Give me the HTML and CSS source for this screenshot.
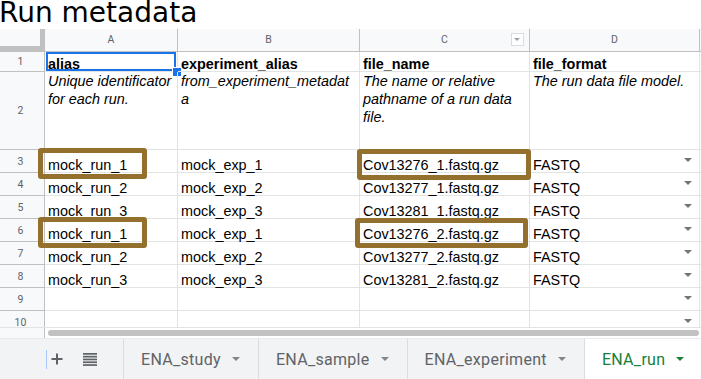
FILE: index.html
```html
<!DOCTYPE html>
<html lang="en">
<head>
    <meta charset="UTF-8">
    <meta name="viewport" content="width=device-width, initial-scale=1.0">
    <title>Run metadata</title>
    <link rel="stylesheet" href="styles.css">
</head>
<body>
    <h1 class="page-title">Run metadata</h1>

    <!-- Spreadsheet grid -->
    <div class="sheet">
        <div class="grid">
            <div class="corner"></div>
            <div class="col-head">A</div>
            <div class="col-head">B</div>
            <div class="col-head">C<span class="col-menu"></span></div>
            <div class="col-head">D</div>
            <div class="col-head"></div>

            <div class="row-head">1</div>
            <div class="cell bold selected">alias</div>
            <div class="cell bold">experiment_alias</div>
            <div class="cell bold">file_name</div>
            <div class="cell bold">file_format</div>
            <div class="cell"></div>

            <div class="row-head">2</div>
            <div class="cell note">Unique identificator for each run.</div>
            <div class="cell note">from_experiment_metadata</div>
            <div class="cell note">The name or relative pathname of a run data file.</div>
            <div class="cell note">The run data file model.</div>
            <div class="cell"></div>

            <div class="row-head">3</div>
            <div class="cell">mock_run_1</div>
            <div class="cell">mock_exp_1</div>
            <div class="cell">Cov13276_1.fastq.gz</div>
            <div class="cell">FASTQ<span class="dd"></span></div>
            <div class="cell"></div>

            <div class="row-head">4</div>
            <div class="cell">mock_run_2</div>
            <div class="cell">mock_exp_2</div>
            <div class="cell">Cov13277_1.fastq.gz</div>
            <div class="cell">FASTQ<span class="dd"></span></div>
            <div class="cell"></div>

            <div class="row-head">5</div>
            <div class="cell">mock_run_3</div>
            <div class="cell">mock_exp_3</div>
            <div class="cell">Cov13281_1.fastq.gz</div>
            <div class="cell">FASTQ<span class="dd"></span></div>
            <div class="cell"></div>

            <div class="row-head">6</div>
            <div class="cell">mock_run_1</div>
            <div class="cell">mock_exp_1</div>
            <div class="cell">Cov13276_2.fastq.gz</div>
            <div class="cell">FASTQ<span class="dd"></span></div>
            <div class="cell"></div>

            <div class="row-head">7</div>
            <div class="cell">mock_run_2</div>
            <div class="cell">mock_exp_2</div>
            <div class="cell">Cov13277_2.fastq.gz</div>
            <div class="cell">FASTQ<span class="dd"></span></div>
            <div class="cell"></div>

            <div class="row-head">8</div>
            <div class="cell">mock_run_3</div>
            <div class="cell">mock_exp_3</div>
            <div class="cell">Cov13281_2.fastq.gz</div>
            <div class="cell">FASTQ<span class="dd"></span></div>
            <div class="cell"></div>

            <div class="row-head">9</div>
            <div class="cell"></div>
            <div class="cell"></div>
            <div class="cell"></div>
            <div class="cell"><span class="dd"></span></div>
            <div class="cell"></div>

            <div class="row-head">10</div>
            <div class="cell"></div>
            <div class="cell"></div>
            <div class="cell"></div>
            <div class="cell"><span class="dd"></span></div>
            <div class="cell"></div>
        </div>

        <!-- Highlight boxes drawn over the grid -->
        <div class="mark mark-a3"></div>
        <div class="mark mark-a6"></div>
        <div class="mark mark-c3"></div>
        <div class="mark mark-c6"></div>
    </div>

    <!-- Horizontal scrollbar -->
    <div class="hscroll">
        <div class="hscroll-gutter"></div>
        <div class="hscroll-track"><div class="hscroll-thumb"></div></div>
    </div>

    <!-- Sheet tabs -->
    <div class="tabbar">
        <div class="tab-tools">
            <span class="drop-line"></span>
            <svg class="icon-add" width="12" height="12" viewBox="0 0 12 12">
                <path d="M6 0.5v11M0.5 6h11" stroke="#5f6368" stroke-width="2" fill="none"/>
            </svg>
            <svg class="icon-list" width="14" height="13" viewBox="0 0 14 13">
                <rect x="0" y="0" width="14" height="1.7" fill="#5f6368"/>
                <rect x="0" y="2.8" width="14" height="1.7" fill="#5f6368"/>
                <rect x="0" y="5.6" width="14" height="1.7" fill="#5f6368"/>
                <rect x="0" y="8.4" width="14" height="1.7" fill="#5f6368"/>
                <rect x="0" y="11.2" width="14" height="1.7" fill="#5f6368"/>
            </svg>
        </div>
        <div class="tab">ENA_study<span class="tab-caret"></span></div>
        <div class="tab">ENA_sample<span class="tab-caret"></span></div>
        <div class="tab">ENA_experiment<span class="tab-caret"></span></div>
        <div class="tab active">ENA_run<span class="tab-caret"></span></div>
    </div>
</body>
</html>
```

FILE: styles.css
```css
* {
    box-sizing: border-box;
}

body {
    margin: 0;
    width: 701px;
    height: 379px;
    overflow: hidden;
    background-color: #fff;
    font-family: "Liberation Sans", Arial, sans-serif;
    color: #000;
}

.page-title {
    margin: 0 0 0 -1px;
    height: 29px;
    font-family: "DejaVu Sans", sans-serif;
    font-size: 28px;
    font-weight: normal;
    line-height: 25px;
    white-space: nowrap;
}

/* grid */
.sheet {
    position: relative;
    height: 298px;
    overflow: hidden;
}

.grid {
    display: grid;
    grid-template-columns: 45px 133px 182px 170px 170px 1fr;
    grid-template-rows: 23px 20px 78px repeat(8, 23px);
}

.corner {
    background-color: #f8f9fa;
    border-right: 5px solid #c0c0c0;
    border-bottom: 6px solid #c0c0c0;
}

.col-head,
.row-head {
    position: relative;
    display: flex;
    align-items: center;
    justify-content: center;
    background-color: #f8f9fa;
    border-right: 1px solid #c0c0c0;
    border-bottom: 1px solid #c0c0c0;
    color: #5f6368;
    font-family: Roboto, Arial, sans-serif;
    font-size: 10.5px;
}

.col-head {
    padding-bottom: 2px;
}

.row-head {
    padding-right: 3px;
}

.col-menu {
    position: absolute;
    top: 4px;
    right: 5px;
    width: 13px;
    height: 13px;
    border: 1px solid #dadce0;
    background-color: #fff;
}

.col-menu::after {
    content: "";
    position: absolute;
    left: 2px;
    top: 4px;
    border-left: 3.5px solid transparent;
    border-right: 3.5px solid transparent;
    border-top: 3.5px solid #9aa0a6;
}

.cell {
    position: relative;
    display: flex;
    align-items: flex-end;
    padding: 0 3px;
    border-right: 1px solid #e2e3e3;
    border-bottom: 1px solid #e2e3e3;
    font-size: 14.4px;
    line-height: 14px;
    white-space: nowrap;
}

.cell.bold {
    font-weight: bold;
}

.cell.note {
    display: block;
    font-style: italic;
    line-height: 18px;
    white-space: normal;
    overflow-wrap: anywhere;
}

.cell.selected::before {
    content: "";
    position: absolute;
    top: 0;
    bottom: 0;
    left: 1px;
    right: 1px;
    border: 2px solid #1a73e8;
}

.cell.selected::after {
    content: "";
    position: absolute;
    left: 127px;
    top: 15px;
    width: 8px;
    height: 8px;
    background-color: #1a73e8;
    border: 1px solid #fff;
}

.dd {
    margin-left: auto;
    margin-right: 4px;
    margin-top: 8px;
    align-self: flex-start;
    width: 0;
    height: 0;
    border-left: 4px solid transparent;
    border-right: 4px solid transparent;
    border-top: 4px solid #757575;
}

/* highlight boxes */
.mark {
    position: absolute;
    border: 5px solid #94702e;
    border-radius: 3px;
}

.mark-a3 { left: 38px; top: 119px; width: 109px; height: 31px; }
.mark-a6 { left: 38px; top: 188px; width: 109px; height: 31px; }
.mark-c3 { left: 357px; top: 120px; width: 174px; height: 31px; }
.mark-c6 { left: 355px; top: 189px; width: 173px; height: 30px; }

/* scrollbar */
.hscroll {
    display: flex;
    height: 11px;
    border-top: 1px solid #e2e3e3;
}

.hscroll-gutter {
    width: 45px;
    background-color: #f8f9fa;
    border-right: 1px solid #c0c0c0;
}

.hscroll-track {
    flex: 1;
    padding: 2px 2px 0 3px;
}

.hscroll-thumb {
    height: 6px;
    border-radius: 3px;
    background-color: #c1c1c1;
}

/* tabs */
.tabbar {
    display: flex;
    height: 41px;
    background-color: #f1f3f4;
    border-top: 1px solid #e8eaed;
    font-family: Roboto, Arial, sans-serif;
    font-size: 16px;
    letter-spacing: 0.3px;
    color: #5f6368;
}

.tab-tools {
    display: flex;
    flex: none;
    align-items: center;
    width: 123px;
    padding-left: 46px;
}

.drop-line {
    width: 1px;
    height: 19px;
    background-color: #a8c7fa;
}

.icon-add {
    margin-left: 4px;
}

.icon-list {
    margin-left: 20px;
}

.tab {
    display: flex;
    flex: none;
    align-items: center;
    padding: 0 18px 0 17px;
    border-left: 1px solid #dadce0;
    white-space: nowrap;
}

.tab-caret {
    margin-left: 11px;
    width: 0;
    height: 0;
    border-left: 4px solid transparent;
    border-right: 4px solid transparent;
    border-top: 4px solid #80868b;
}

.tab.active {
    flex: 1;
    min-width: 0;
    background-color: #fff;
    color: #188038;
}

.tab.active .tab-caret {
    border-top-color: #188038;
}
```
